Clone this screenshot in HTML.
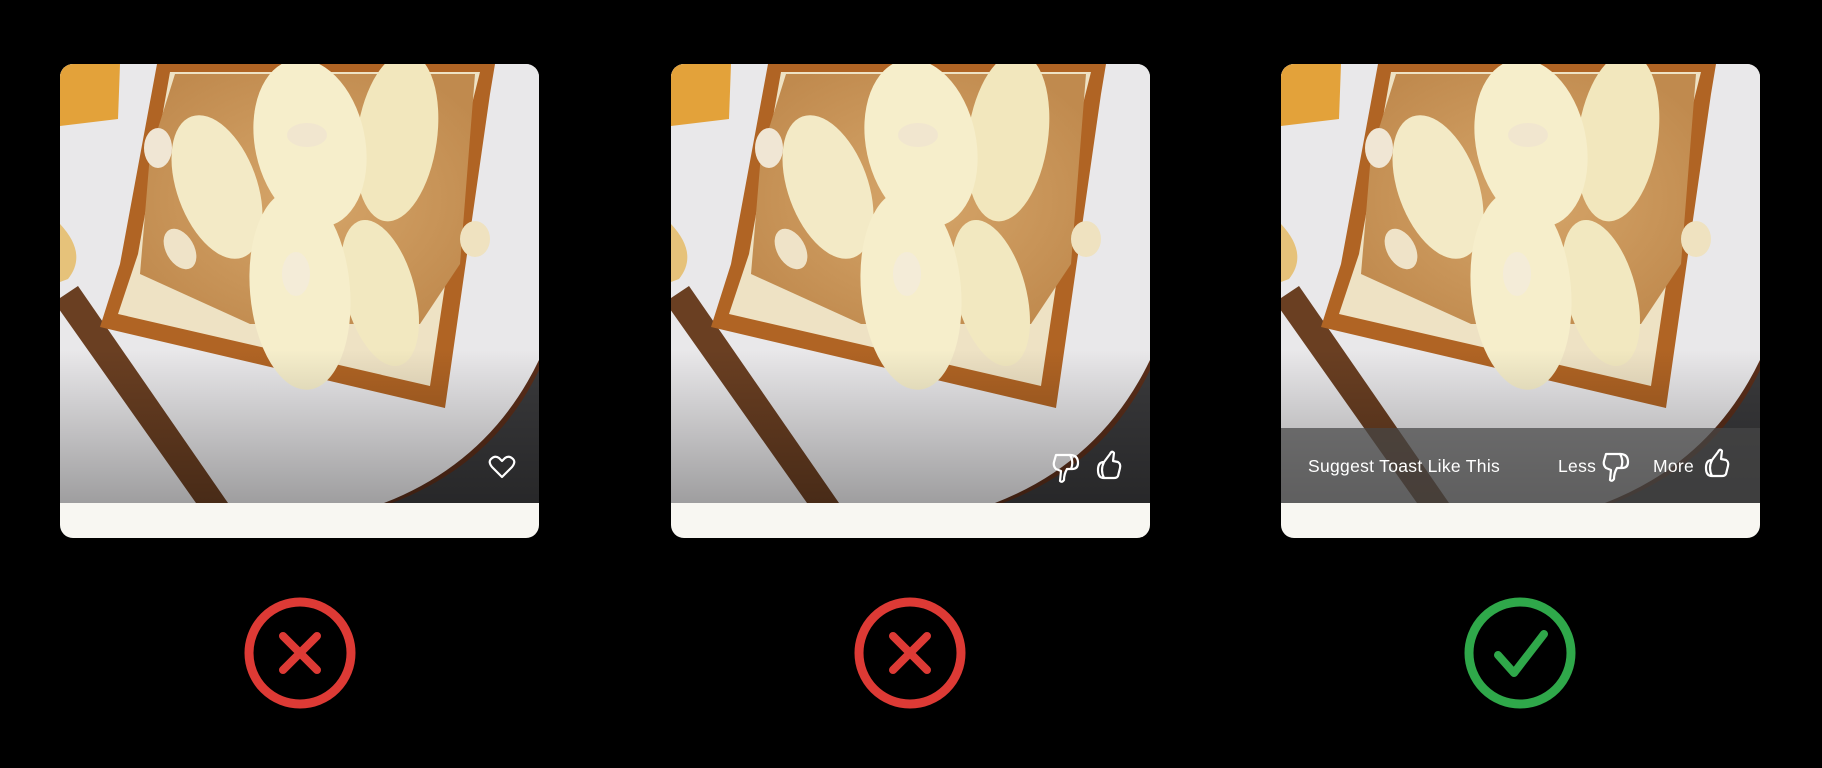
<!DOCTYPE html>
<html><head><meta charset="utf-8"><style>
body{margin:0;background:#000;width:1822px;height:768px;overflow:hidden;position:relative;font-family:"Liberation Sans",sans-serif}
.card{position:absolute;top:64px;width:479px;height:474px;border-radius:13px;overflow:hidden;background:#f8f7f2}
.card svg.food{position:absolute;left:0;top:0;width:479px;height:439px}
.ov{position:absolute;left:0;top:364px;width:479px;height:75px;background:rgba(70,70,70,.72);color:#fff;font-size:17.5px;letter-spacing:0.3px}
.ic{position:absolute}
.mark{position:absolute;top:597px;width:112px;height:112px}
</style></head><body>
<svg width="0" height="0" style="position:absolute">
<defs>
<linearGradient id="shade" x1="0" y1="0" x2="0" y2="1"><stop offset="0.65" stop-color="#000" stop-opacity="0"/><stop offset="1" stop-color="#000" stop-opacity="0.32"/></linearGradient>
<radialGradient id="pb" cx=".5" cy=".5" r=".6"><stop offset="0" stop-color="#d6a66a"/><stop offset="1" stop-color="#c08a4e"/></radialGradient>
<g id="food">
<rect width="479" height="439" fill="#e9e8ea"/>
<path d="M479 300 Q430 400 330 439 L479 439Z" fill="#3a3a3c"/>
<path d="M479 296 Q430 398 324 439 L332 439 Q434 400 479 306Z" fill="#5a2e1a"/>
<path d="M0 0 H60 L58 55 L0 62Z" fill="#e3a23a"/>
<path d="M0 160 Q28 190 8 215 L0 218Z" fill="#e6c27a"/>
<path d="M-6 238 L18 222 L168 439 L136 439Z" fill="#6a3f22"/>
<path d="M97 0 H435 L430 30 L385 344 L40 263 L60 200Z" fill="#b06424"/>
<path d="M110 8 H420 L412 40 L370 322 L58 250 L78 190Z" fill="#eee2c4"/>
<path d="M115 10 H415 L400 200 L360 260 L190 260 L80 210 L90 90Z" fill="url(#pb)"/>
<ellipse cx="157" cy="123" rx="40" ry="75" transform="rotate(-20 157 123)" fill="#f3eac6"/>
<ellipse cx="337" cy="73" rx="40" ry="85" transform="rotate(8 337 73)" fill="#f2e7bd"/>
<ellipse cx="250" cy="79" rx="55" ry="85" transform="rotate(-12 250 79)" fill="#f6eecb"/>
<ellipse cx="320" cy="229" rx="35" ry="75" transform="rotate(-15 320 229)" fill="#f2e8c0"/>
<ellipse cx="240" cy="226" rx="50" ry="100" transform="rotate(-5 240 226)" fill="#f6eecb"/>
<ellipse cx="98" cy="84" rx="14" ry="20" fill="#f0e6d4"/>
<ellipse cx="120" cy="185" rx="14" ry="22" transform="rotate(-30 120 185)" fill="#efe3c8"/>
<ellipse cx="236" cy="210" rx="14" ry="22" fill="#f4ecd8"/>
<ellipse cx="247" cy="71" rx="20" ry="12" fill="#f1e6cf"/>
<ellipse cx="415" cy="175" rx="15" ry="18" fill="#efe2c0"/>
<rect width="479" height="439" fill="url(#shade)"/>
</g>
<g id="tdown" fill="none" stroke="#fff" stroke-width="2.2" stroke-linejoin="round" stroke-linecap="round"><path d="M4 3 H18 Q26 3 26 11 Q26 17 20 17 L15 17 Q12 22 12 28 Q10 31 8 29 L9 19 L4 17 Q1 14 2 10 Z M18 3 Q22 10 19 17"/></g>
<g id="tup" fill="none" stroke="#fff" stroke-width="2.2" stroke-linejoin="round" stroke-linecap="round"><path d="M10 12 L16 4 Q18 0 20 3 L19 11 L24 12 Q27 14 26 18 L24 26 Q23 28 20 28 H10 Q4 28 4 20 Q4 12 10 12 Z M10 12 Q6 20 10 28"/></g>
</defs></svg>

<div class="card" style="left:60px"><svg class="food" viewBox="0 0 479 439"><use href="#food"/></svg>
<svg class="ic" style="left:428px;top:390px" width="28" height="26" viewBox="0 0 28 26"><path d="M14 23 L4 13 Q0 8 3 5 Q7 1 11 4 L14 7 L17 4 Q21 1 25 5 Q28 8 24 13Z" fill="none" stroke="#fff" stroke-width="2.2" stroke-linejoin="round"/></svg>
</div>
<div class="card" style="left:671px"><svg class="food" viewBox="0 0 479 439"><use href="#food"/></svg>
<svg class="ic" style="left:381px;top:388px" width="30" height="32"><use href="#tdown"/></svg>
<svg class="ic" style="left:423px;top:386px" width="30" height="32"><use href="#tup"/></svg>
</div>
<div class="card" style="left:1281px"><svg class="food" viewBox="0 0 479 439"><use href="#food"/></svg>
<div class="ov">
<span style="position:absolute;left:27px;top:28px">Suggest Toast Like This</span>
<span style="position:absolute;left:277px;top:28px">Less</span>
<svg class="ic" style="left:321px;top:23px" width="30" height="32"><use href="#tdown"/></svg>
<span style="position:absolute;left:372px;top:28px">More</span>
<svg class="ic" style="left:421px;top:20px" width="30" height="32"><use href="#tup"/></svg>
</div></div>

<svg class="mark" style="left:244px" viewBox="0 0 112 112"><circle cx="56" cy="56" r="51" fill="none" stroke="#dd3a35" stroke-width="9"/><path d="M39 39 L73 73 M73 39 L39 73" stroke="#dd3a35" stroke-width="8" stroke-linecap="round"/></svg>
<svg class="mark" style="left:854px" viewBox="0 0 112 112"><circle cx="56" cy="56" r="51" fill="none" stroke="#dd3a35" stroke-width="9"/><path d="M39 39 L73 73 M73 39 L39 73" stroke="#dd3a35" stroke-width="8" stroke-linecap="round"/></svg>
<svg class="mark" style="left:1464px" viewBox="0 0 112 112"><circle cx="56" cy="56" r="51" fill="none" stroke="#2fa84a" stroke-width="9"/><path d="M34 58 L50 76 L80 37" fill="none" stroke="#2fa84a" stroke-width="8" stroke-linecap="round" stroke-linejoin="round"/></svg>
</body></html>
